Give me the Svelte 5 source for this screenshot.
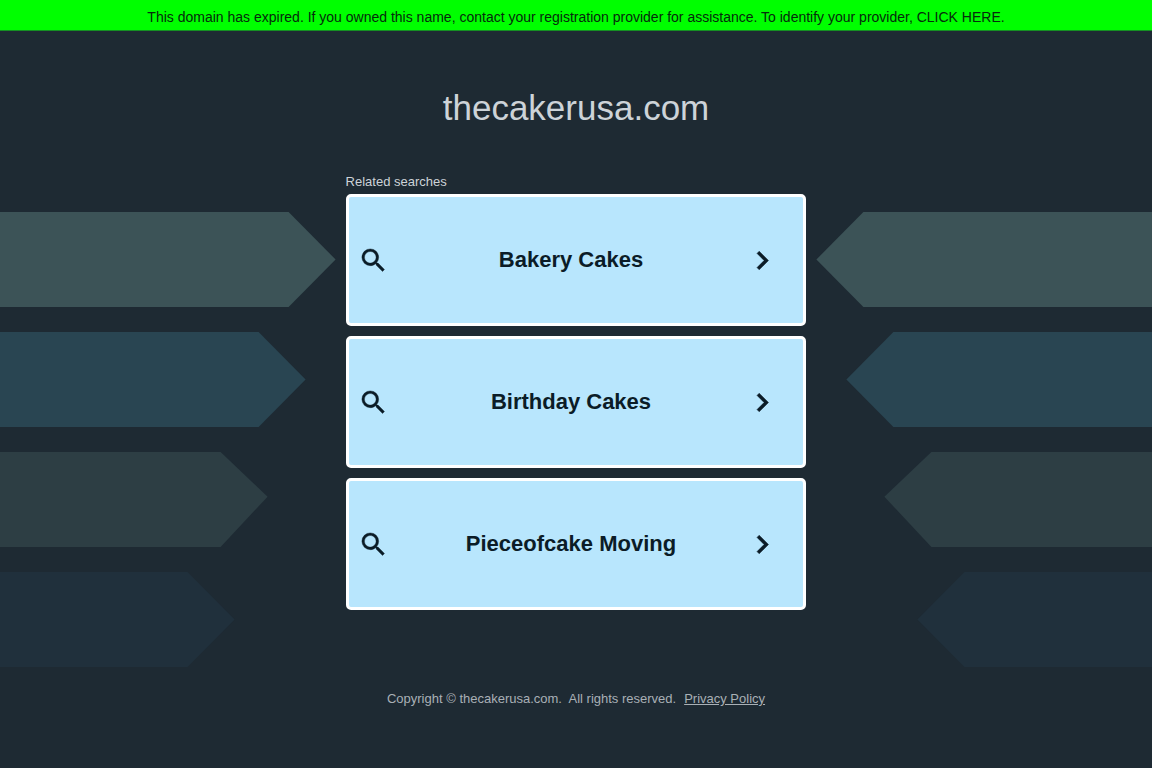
<script lang="ts">
  const domain: string = 'thecakerusa.com';
  const searches: string[] = ['Bakery Cakes', 'Birthday Cakes', 'Pieceofcake Moving'];
  const tones: string[] = ['sage', 'teal', 'moss', 'navy'];
</script>

<div class="page">
  <div class="banner">
    <p>This domain has expired. If you owned this name, contact your registration provider for assistance. To identify your provider, <a href="#provider">CLICK HERE.</a></p>
  </div>

  <header>
    <h1>{domain}</h1>
  </header>

  <main>
    <div class="arrows left" aria-hidden="true">
      {#each tones as tone}
        <div class="arrow {tone}"></div>
      {/each}
    </div>

    <section>
      <h2>Related searches</h2>
      <nav>
        {#each searches as search}
          <a class="card" href="#search">
            <svg class="icon" viewBox="0 0 24 24" aria-hidden="true">
              <path d="M15.5 14h-.79l-.28-.27A6.471 6.471 0 0 0 16 9.5 6.5 6.5 0 1 0 9.5 16c1.61 0 3.09-.59 4.23-1.57l.27.28v.79l5 4.99L20.49 19l-4.99-5zm-6 0C7.01 14 5 11.99 5 9.5S7.01 5 9.5 5 14 7.01 14 9.5 11.99 14 9.5 14z" />
            </svg>
            <span>{search}</span>
            <svg class="icon" viewBox="6 2 20 20" aria-hidden="true">
              <path d="M10 6L8.59 7.41 13.17 12l-4.58 4.59L10 18l6-6z" />
            </svg>
          </a>
        {/each}
      </nav>
    </section>

    <div class="arrows right" aria-hidden="true">
      {#each tones as tone}
        <div class="arrow {tone}"></div>
      {/each}
    </div>
  </main>

  <footer>
    <span>Copyright © {domain}.&nbsp; All rights reserved.</span>
    <a href="#privacy">Privacy Policy</a>
  </footer>
</div>

<style>
  :global(body) {
    margin: 0;
    background: #1e2a33;
  }

  .page {
    min-height: 100vh;
    font-family: "Liberation Sans", Arial, sans-serif;
    color: #cdd3d8;
  }

  .banner {
    padding: 9px 16px 5px;
    border-bottom: 1px solid #159023;
    background: #00ff00;
    color: #062b0c;
    font-size: 14px;
    line-height: 16px;
    text-align: center;
  }

  .banner p {
    margin: 0;
  }

  .banner a {
    color: inherit;
    text-decoration: none;
  }

  h1 {
    margin: 0;
    padding: 57px 0 46px;
    font-size: 35px;
    font-weight: 400;
    line-height: 40px;
    text-align: center;
  }

  main {
    display: grid;
    grid-template-columns: 3fr 4fr 3fr;
  }

  h2 {
    margin: 0;
    padding-bottom: 4px;
    font-size: 13px;
    font-weight: 400;
    line-height: 16px;
  }

  nav {
    display: flex;
    flex-direction: column;
    gap: 10px;
  }

  .card {
    display: flex;
    align-items: center;
    box-sizing: border-box;
    min-height: 132px;
    padding: 0 19px 0 9px;
    border: 3px solid #fff;
    border-radius: 5px;
    background: #b8e6fd;
    color: #0b1c27;
    font-size: 22px;
    font-weight: 700;
    text-decoration: none;
  }

  .card span {
    flex: 1;
    text-align: center;
  }

  .icon {
    width: 31px;
    height: 31px;
    fill: currentColor;
    stroke: currentColor;
    stroke-width: 0.3;
  }

  .arrows {
    display: flex;
    flex-direction: column;
    gap: 25px;
    padding-top: 38px;
  }

  .arrow {
    height: 95px;
  }

  .left .arrow {
    margin-right: var(--inset);
    clip-path: polygon(0 0, calc(100% - 47px) 0, 100% var(--tip, 50%), calc(100% - 47px) 100%, 0 100%);
  }

  .right .arrow {
    margin-left: var(--inset);
    clip-path: polygon(47px 0, 100% 0, 100% 100%, 47px 100%, 0 var(--tip, 50%));
  }

  .sage {
    --inset: 10px;
    background: #3c5357;
  }

  .teal {
    --inset: 40px;
    background: #294552;
  }

  .moss {
    --inset: 78px;
    --tip: 47%;
    background: #2d3e44;
  }

  .navy {
    --inset: 111px;
    background: #20303c;
  }

  footer {
    display: flex;
    justify-content: center;
    gap: 8px;
    padding: 24px 0 60px;
    color: #a9b0b6;
    font-size: 13px;
    line-height: 16px;
  }

  footer a {
    color: inherit;
  }
</style>
